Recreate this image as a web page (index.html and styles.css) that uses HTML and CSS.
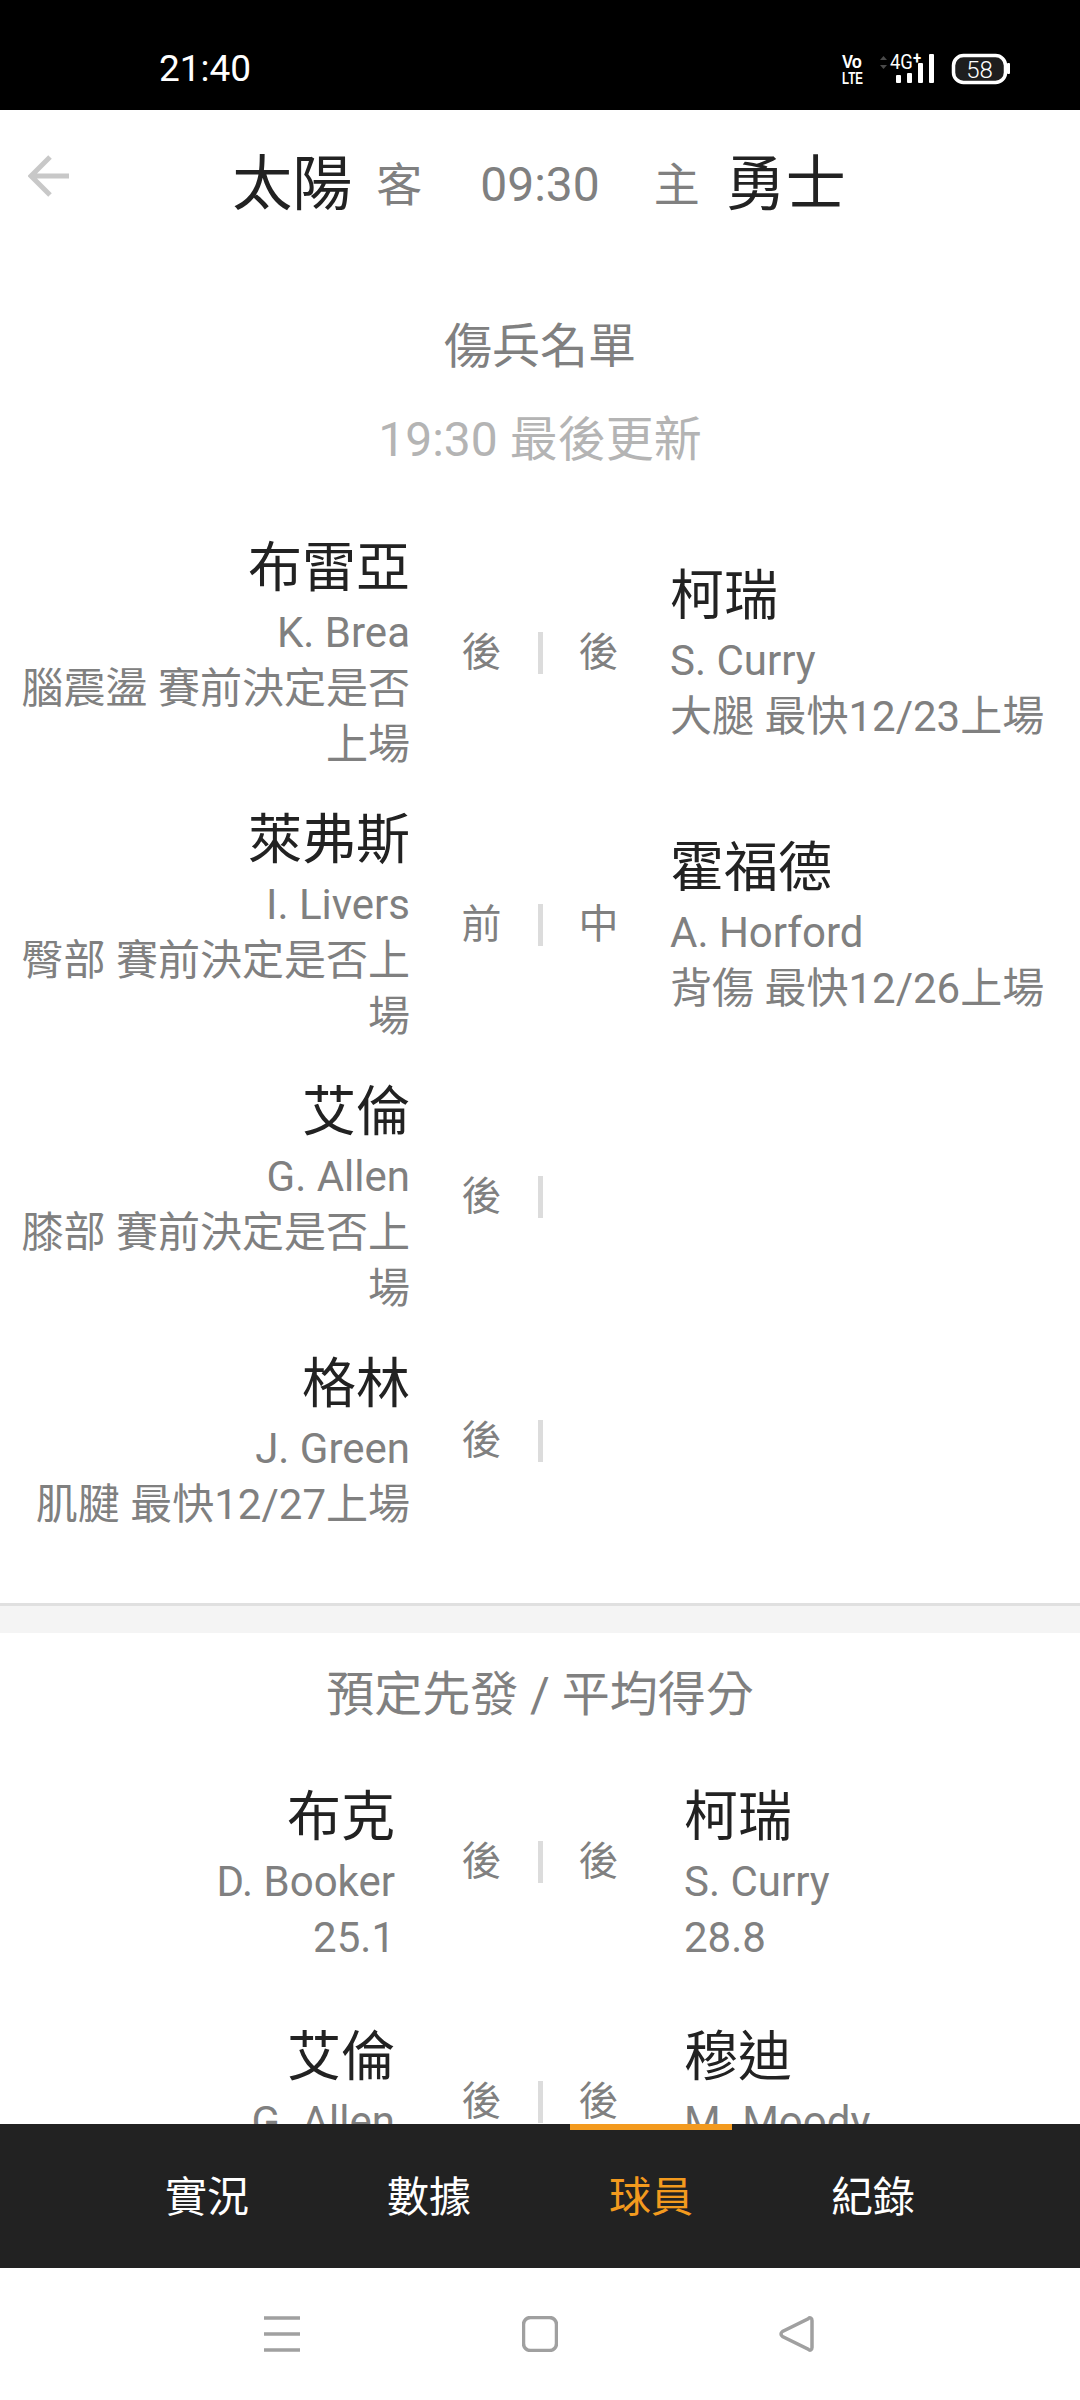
FILE: index.html
```html
<!DOCTYPE html>
<html lang="zh-Hant">
<head>
<meta charset="utf-8">
<title>傷兵名單</title>
<link rel="stylesheet" href="styles.css">
</head>
<body>
<div class="app">
  <div class="status">
    <span class="clock">21:40</span>
    <svg class="status-icons" width="170" height="50" viewBox="842 44 170 50">
      <text class="st-vo" x="843" y="68" textLength="20" lengthAdjust="spacingAndGlyphs">Vo</text>
      <text class="st-lte" x="843" y="84" textLength="21" lengthAdjust="spacingAndGlyphs">LTE</text>
      <path class="st-arrows" d="M881 60l3.500-4 3.500 4zM881 65l3.500 4 3.500-4z"/>
      <text class="st-4g" x="891" y="69" textLength="31" lengthAdjust="spacingAndGlyphs">4G<tspan class="st-plus" dy="-5">+</tspan></text>
      <rect class="st-bar" x="897" y="75" width="5" height="8" rx="1"/>
      <rect class="st-bar" x="908" y="73" width="5" height="10" rx="1"/>
      <rect class="st-bar" x="919" y="63" width="5" height="20" rx="1"/>
      <rect class="st-bar" x="930" y="54" width="5" height="29" rx="1"/>
      <rect class="st-batt" x="954.500" y="55.500" width="52" height="27" rx="10"/>
      <rect class="st-bar" x="1008" y="63" width="3" height="11" rx="1"/>
      <text class="st-level" x="980.500" y="78" text-anchor="middle">58</text>
    </svg>
  </div>

  <main class="content">
    <header class="match">
      <div class="match-side match-away">
        <svg class="back" width="42" height="42" viewBox="0 0 42 42"><path d="M41 21H3M22 2 3 21l19 19"/></svg>
        <span class="team">太陽</span>
        <span class="role">客</span>
      </div>
      <span class="time">09:30</span>
      <div class="match-side match-home">
        <span class="role">主</span>
        <span class="team">勇士</span>
      </div>
    </header>

    <section class="injuries">
      <h2 class="title">傷兵名單</h2>
      <p class="updated">19:30 最後更新</p>
      <div class="row">
        <div class="player left"><div class="name">布雷亞</div><div class="sub">K. Brea</div><div class="sub">腦震盪 賽前決定是否上場</div></div>
        <div class="marks"><span class="pos">後</span><i class="bar"></i><span class="pos">後</span></div>
        <div class="player right"><div class="name">柯瑞</div><div class="sub">S. Curry</div><div class="sub">大腿 最快12/23上場</div></div>
      </div>
      <div class="row">
        <div class="player left"><div class="name">萊弗斯</div><div class="sub">I. Livers</div><div class="sub">臀部 賽前決定是否上場</div></div>
        <div class="marks"><span class="pos">前</span><i class="bar"></i><span class="pos">中</span></div>
        <div class="player right"><div class="name">霍福德</div><div class="sub">A. Horford</div><div class="sub">背傷 最快12/26上場</div></div>
      </div>
      <div class="row">
        <div class="player left"><div class="name">艾倫</div><div class="sub">G. Allen</div><div class="sub">膝部 賽前決定是否上場</div></div>
        <div class="marks"><span class="pos">後</span><i class="bar"></i><span class="pos"></span></div>
        <div class="player right"></div>
      </div>
      <div class="row">
        <div class="player left"><div class="name">格林</div><div class="sub">J. Green</div><div class="sub">肌腱 最快12/27上場</div></div>
        <div class="marks"><span class="pos">後</span><i class="bar"></i><span class="pos"></span></div>
        <div class="player right"></div>
      </div>
    </section>

    <div class="gap"></div>

    <section class="starters">
      <h2 class="title">預定先發 / 平均得分</h2>
      <div class="row">
        <div class="player left"><div class="name">布克</div><div class="sub">D. Booker</div><div class="sub">25.1</div></div>
        <div class="marks"><span class="pos">後</span><i class="bar"></i><span class="pos">後</span></div>
        <div class="player right"><div class="name">柯瑞</div><div class="sub">S. Curry</div><div class="sub">28.8</div></div>
      </div>
      <div class="row">
        <div class="player left"><div class="name">艾倫</div><div class="sub">G. Allen</div><div class="sub-empty"></div></div>
        <div class="marks"><span class="pos">後</span><i class="bar"></i><span class="pos">後</span></div>
        <div class="player right"><div class="name">穆迪</div><div class="sub">M. Moody</div><div class="sub-empty"></div></div>
      </div>
    </section>
  </main>

  <nav class="tabs">
    <span class="tab">實況</span>
    <span class="tab">數據</span>
    <span class="tab active">球員</span>
    <span class="tab">紀錄</span>
  </nav>

  <div class="sysnav">
    <svg class="nav-icon" width="36" height="36" viewBox="0 0 36 36"><path d="M0 2h36M0 18h36M0 34h36"/></svg>
    <svg class="nav-icon" width="36" height="36" viewBox="0 0 36 36"><rect x="1.500" y="1.500" width="33" height="33" rx="7"/></svg>
    <svg class="nav-icon" width="36" height="36" viewBox="0 0 36 36"><path d="M33 4.500c0-2.500-2-3.500-3.800-1.800L3.500 15.500c-2 1.600-2 3.400 0 5l25.700 12.800c1.800 1.700 3.800.7 3.800-1.800z"/></svg>
  </div>
</div>
</body>
</html>
```
FILE: styles.css
```css
* { box-sizing: border-box; }
html, body { margin: 0; padding: 0; }
body {
  background: #fff;
  font-family: Roboto, "Noto Sans CJK TC", sans-serif;
  color: #808080;
}
.app { width: 1080px; height: 2400px; display: flex; flex-direction: column; overflow: hidden; }

/* status bar */
.status {
  height: 110px; flex: none; background: #000; color: #fff;
  display: flex; align-items: flex-start; justify-content: space-between;
  padding: 44px 69px 0 159px;
}
.clock { font-size: 37px; line-height: 32px; margin-top: 9px; }
.status-icons { display: block; }
.st-vo, .st-lte { fill: #fff; font-family: "Liberation Sans", sans-serif; font-weight: 700; }
.st-vo { font-size: 19px; }
.st-lte { font-size: 17px; }
.st-arrows { fill: #4a4a4a; }
.st-4g { fill: #fff; font-family: Roboto, sans-serif; font-size: 21px; }
.st-plus { font-size: 17px; font-weight: 700; }
.st-bar { fill: #fff; }
.st-batt { fill: #1e1e1e; stroke: #fff; stroke-width: 3.500; }
.st-level { fill: #fff; font-family: Roboto, sans-serif; font-size: 24px; font-weight: 300; }

/* scroll area */
.content { flex: 1; min-height: 0; overflow: hidden; }

.match {
  height: 146px; display: grid; grid-template-columns: 1fr auto 1fr; align-items: center;
  padding: 3px 0 0 28px;
}
.match-side { display: flex; align-items: center; gap: 24px; }
.match-away { padding-right: 86px; }
.match-home { padding-left: 54px; gap: 26px; }
.back { margin-right: auto; margin-bottom: 17px; fill: none; stroke: #c8c8c8; stroke-width: 5; }
.team { font-size: 60px; line-height: 80px; color: #222; }
.role { font-size: 46px; line-height: 80px; color: #808080; }
.time { font-size: 48px; line-height: 80px; color: #808080; margin-left: -28px; }

.title, .updated {
  margin: 0; text-align: center; font-size: 48px; font-weight: 400; color: #808080;
}
.title { line-height: 91px; }
.updated { line-height: 95px; color: #b4b4b4; margin-bottom: 30px; }
.injuries { padding: 45px 0 54px; }

.row { display: grid; grid-template-columns: 410px 260px 410px; align-items: center; }
.player { min-width: 0; padding-block: 16px; }
.left { text-align: right; padding-left: 15px; }
.right { text-align: left; }
.name { font-size: 54px; line-height: 72px; color: #222; }
.sub { font-size: 42px; line-height: 56px; color: #808080; }
.sub-empty { height: 56px; }

.marks {
  display: flex; align-items: center; justify-content: center; gap: 36px;
}
.pos { width: 40px; font-size: 40px; line-height: 56px; text-align: center; color: #808080; }
.bar { display: block; width: 5px; height: 42px; background: #dcdcdc; }

.gap { height: 30px; background: #f4f4f4; border-top: 3px solid #e0e0e0; }

.starters { padding-top: 16px; }
.starters .title { line-height: 92px; margin-bottom: 13px; }
.starters .row { padding-block: 12px; }
.starters .marks { margin-bottom: 24px; }
.starters .left { padding-right: 15px; }
.starters .right { padding-left: 14px; }

/* tab bar */
.tabs {
  height: 144px; flex: none; background: #222; display: flex; padding: 0 96px;
}
.tab {
  flex: 1 1 0; position: relative; display: flex; align-items: center; justify-content: center;
  font-size: 42px; color: #fff; padding-bottom: 5px;
}
.tab.active { color: #f39a1e; }
.tab.active::before {
  content: ""; position: absolute; top: 0; left: 30px; right: 30px; height: 6px; background: #f39a1e;
}

/* system nav */
.sysnav {
  height: 132px; flex: none; background: #fff; display: flex; align-items: center; justify-content: space-between;
  padding: 0 265px 0 264px;
}
.nav-icon { fill: none; stroke: #a0a0a0; stroke-width: 3.500; }
```
